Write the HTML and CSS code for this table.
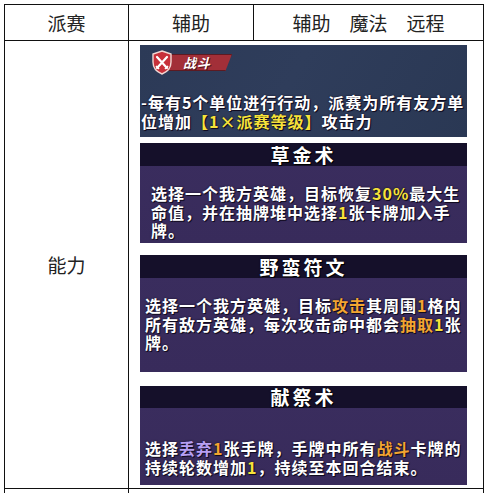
FILE: index.html
```html
<!DOCTYPE html>
<html lang="zh">
<head>
<meta charset="utf-8">
<link rel="stylesheet" href="styles.css">
</head>
<body>
<div class="sheet">
  <div class="cell head">派赛</div>
  <div class="cell head">辅助</div>
  <div class="cell head">辅助　魔法　远程</div>

  <div class="cell label">能力</div>
  <div class="cell cards">
    <div class="card battle">
      <div class="badge">
        <svg class="shield" width="20" height="25" viewBox="0 0 20 25">
          <path d="M10 1 L19 4 L19 12 C19 18 15 22 10 24 C5 22 1 18 1 12 L1 4 Z" fill="#c7303a" stroke="#f1d7d3" stroke-width="1.4"/>
          <path d="M5 7 L15 18 M15 7 L5 18" stroke="#fff" stroke-width="2.2" stroke-linecap="round"/>
          <path d="M4 16 L7 19 M16 16 L13 19" stroke="#fff" stroke-width="1.6"/>
        </svg>
        <span class="tag">战斗</span>
      </div>
      <p class="txt">-每有5个单位进行行动，派赛为所有友方单<br>位增加<span class="y">【1×派赛等级】</span>攻击力</p>
    </div>

    <div class="card c2">
      <div class="title">草金术</div>
      <p class="txt">选择一个我方英雄，目标恢复<span class="y">30%</span>最大生<br>命值，并在抽牌堆中选择<span class="y">1</span>张卡牌加入手<br>牌。</p>
    </div>

    <div class="card c3">
      <div class="title">野蛮符文</div>
      <p class="txt">选择一个我方英雄，目标<span class="o">攻击</span>其周围<span class="o">1</span>格内<br>所有敌方英雄，每次攻击命中都会<span class="o">抽取</span><span class="y">1</span>张<br>牌。</p>
    </div>

    <div class="card c4">
      <div class="title">献祭术</div>
      <p class="txt">选择<span class="p">丢弃</span><span class="o">1</span>张手牌，手牌中所有<span class="o">战斗</span>卡牌的<br>持续轮数增加<span class="y">1</span>，持续至本回合结束。</p>
    </div>
  </div>

  <div class="cell tail"></div>
  <div class="cell tail wide"></div>
</div>
</body>
</html>
```
FILE: styles.css
```css
html, body {
  margin: 0;
  padding: 0;
  background: #fff;
  overflow: hidden;
}
body {
  padding: 4px 0 0 4px;
  font-family: "Noto Sans CJK SC", sans-serif;
}
.sheet {
  display: grid;
  grid-template-columns: 124px 125px 230px;
  grid-template-rows: 36px 448px 4px;
  border-left: 1px solid #111;
  border-top: 1px solid #111;
  width: 479px;
}
.cell {
  border-right: 1px solid #111;
  border-bottom: 1px solid #111;
}
.tail { border-bottom: none; }
.head, .label {
  display: flex;
  align-items: center;
  justify-content: center;
  font-size: 19px;
  font-weight: 400;
  color: #222;
}
.cards {
  grid-column: span 2;
  padding: 4px 0 0 11px;
  display: flex;
  flex-direction: column;
}
.wide { grid-column: span 2; }
.card {
  width: 327px;
  box-sizing: border-box;
  color: #fff;
  font-weight: 700;
}
.txt {
  margin: 0;
  font-size: 16px;
  letter-spacing: 1px;
  line-height: 18.5px;
  white-space: nowrap;
  text-shadow: 0 0 2px #120c20, 1px 1px 0 #120c20;
}
.y { color: #f6e23a; }
.o { color: #f3a531; }
.p { color: #b79ff3; }

.battle {
  height: 92px;
  margin-bottom: 6px;
  background: linear-gradient(120deg, #2c3a57 0%, #2f3d5b 45%, #2a3854 100%);
  padding: 5px 0 0 1px;
}
.battle .txt { line-height: 19px; margin-top: 18px; }
.badge {
  display: flex;
  align-items: center;
  height: 25px;
  margin-left: 11px;
}
.shield { position: relative; z-index: 1; }
.tag {
  margin-left: -6px;
  height: 15px;
  line-height: 15px;
  padding: 0 20px 0 16px;
  background: #a22f38;
  border: 1px solid #5d1a22;
  clip-path: polygon(0 0, 100% 0, 90% 100%, 0 100%);
  font-size: 13px;
  font-style: italic;
  font-weight: 700;
  letter-spacing: 1px;
  color: #fff;
  text-shadow: 1px 1px 0 #4a1018;
}

.c2, .c3, .c4 {
  background: linear-gradient(180deg, #42346a 0%, #3a2d5e 12%, #382b5b 100%);
}
.title {
  height: 23px;
  background: #15102a;
  text-align: center;
  font-size: 19px;
  line-height: 23px;
  letter-spacing: 3px;
  text-shadow: 0 0 2px #000, 1px 1px 0 #000;
}
.c2 { height: 100px; margin-bottom: 12px; }
.c2 .txt { padding: 18px 0 0 11px; }
.c3 { height: 117px; margin-bottom: 14px; }
.c3 .txt { padding: 18px 0 0 5px; }
.c4 { height: 99px; }
.c4 .title { height: 22px; line-height: 22px; }
.c4 .txt { padding: 31px 0 0 5px; }
```
